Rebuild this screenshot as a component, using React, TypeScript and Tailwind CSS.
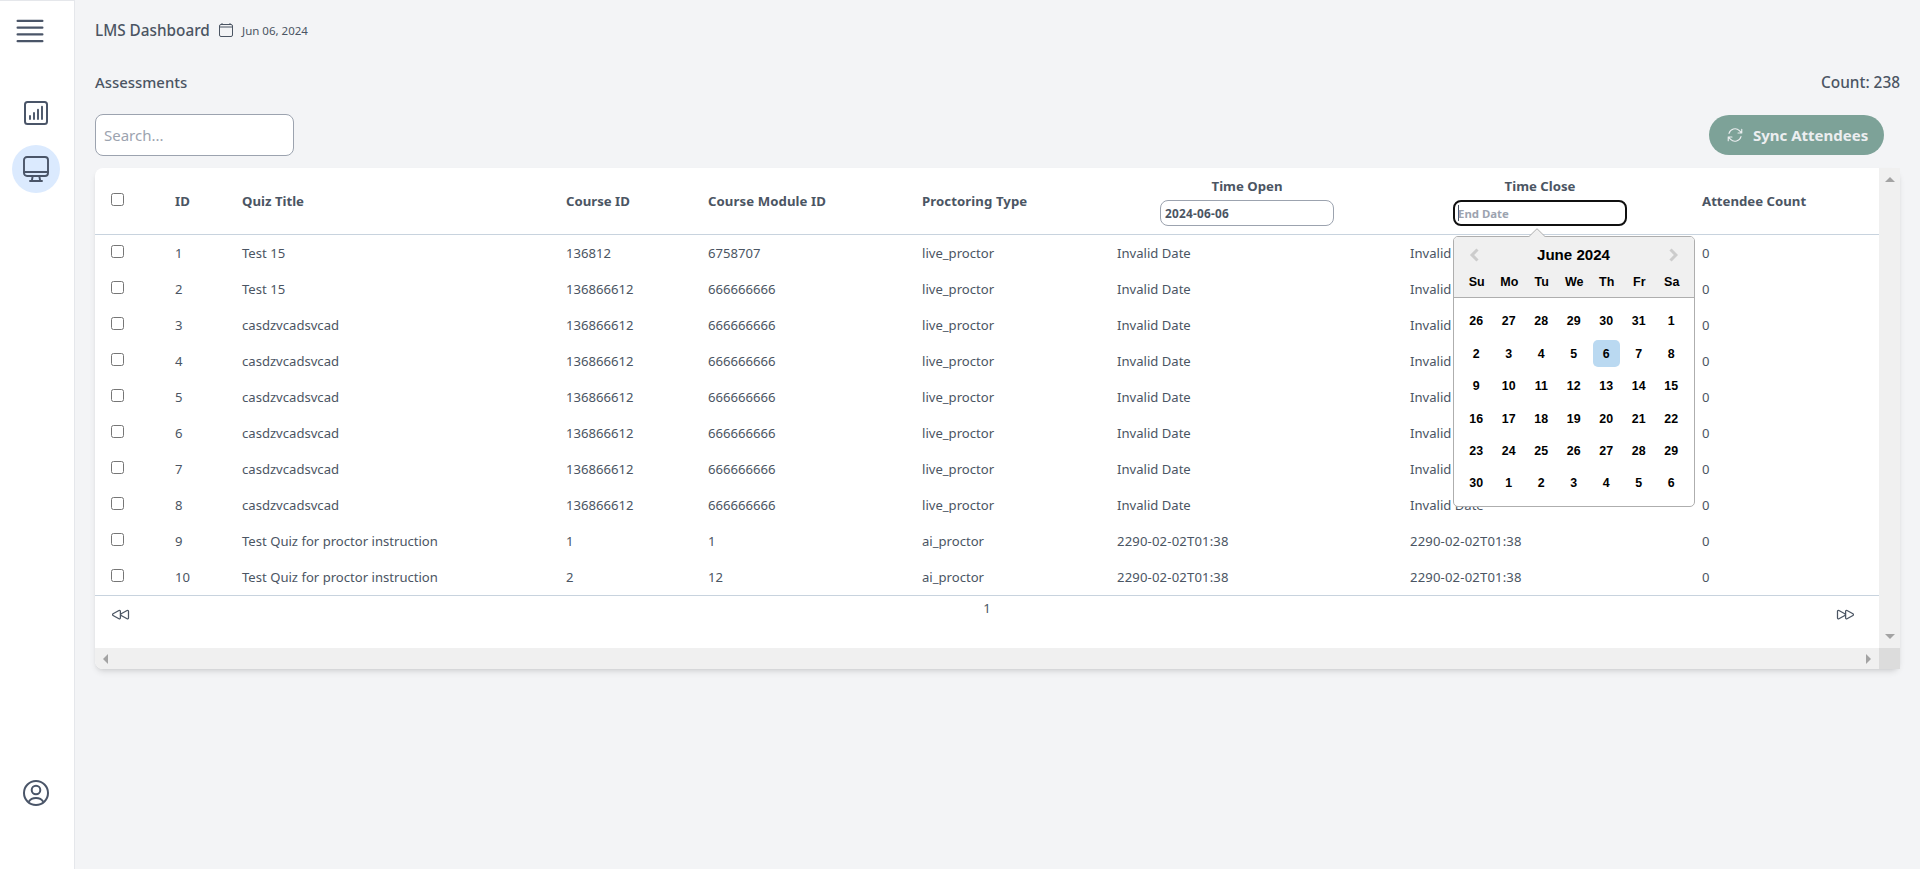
import { HiOutlineBars4, HiOutlineArrowPath, HiOutlineForward, HiOutlineBackward } from "react-icons/hi2";
import { IoCalendarClearOutline } from "react-icons/io5";
import type { ReactNode } from "react";

const sans = "font-['Noto_Sans','Open_Sans',sans-serif]";

type Row = [string, string, string, string, string, string, string];
const invalid = "Invalid Date";
const iso = "2290-02-02T01:38";
const cas = (id: string): Row => [id, "casdzvcadsvcad", "136866612", "666666666", "live_proctor", invalid, invalid];
const rows: Row[] = [
  ["1", "Test 15", "136812", "6758707", "live_proctor", invalid, invalid],
  ["2", "Test 15", "136866612", "666666666", "live_proctor", invalid, invalid],
  cas("3"), cas("4"), cas("5"), cas("6"), cas("7"), cas("8"),
  ["9", "Test Quiz for proctor instruction", "1", "1", "ai_proctor", iso, iso],
  ["10", "Test Quiz for proctor instruction", "2", "12", "ai_proctor", iso, iso],
];

const weeks = [
  [26, 27, 28, 29, 30, 31, 1],
  [2, 3, 4, 5, 6, 7, 8],
  [9, 10, 11, 12, 13, 14, 15],
  [16, 17, 18, 19, 20, 21, 22],
  [23, 24, 25, 26, 27, 28, 29],
  [30, 1, 2, 3, 4, 5, 6],
];

const cols = "grid grid-cols-[80px_67px_324px_142px_214px_195px_293px_292px_177px]";

function Checkbox() {
  return <span className="block size-[13px] rounded-[2.5px] border border-[#767676] bg-white" />;
}

function Sidebar() {
  return (
    <aside className="flex w-[75px] shrink-0 flex-col border-r border-t border-[#e5e7eb] bg-white text-[#4a5568]">
      <HiOutlineBars4 className="ml-3 mt-3 size-9" />
      <div className="mt-[40px] flex size-12 items-center justify-center self-center -translate-x-px">
        <svg viewBox="0 0 24 24" className="size-6" fill="none" stroke="currentColor" strokeWidth="2" strokeLinecap="round">
          <rect x="1" y="1" width="22" height="22" rx="2.5" />
          <path d="M6 15v3M10 12v6M14 8.7V18M18 5.7V18" strokeWidth="1.9" />
        </svg>
      </div>
      <div className="mt-2 flex size-12 items-center justify-center self-center rounded-full bg-[#dbeafe] -translate-x-px">
        <svg viewBox="0 0 26 26" className="size-[26px]" fill="none" stroke="currentColor" strokeWidth="1.9" strokeLinejoin="round" strokeLinecap="round">
          <rect x="1" y="1" width="24" height="19" rx="3" />
          <path d="M1 16h24M9.7 20 8.8 25M16.3 20l.9 5M7 25h12" />
        </svg>
      </div>
      <div className="mt-auto mb-[63px] flex self-center -translate-x-px">
        <svg viewBox="0 0 26 26" className="size-[26px]" fill="none" stroke="currentColor" strokeWidth="2">
          <circle cx="13" cy="13" r="12" />
          <circle cx="13" cy="10" r="4.3" />
          <path d="M5.7 21.8c1.6-2.6 4.2-3.8 7.3-3.8s5.7 1.2 7.3 3.8" />
        </svg>
      </div>
    </aside>
  );
}

function Calendar() {
  return (
    <div className="absolute left-0 top-full z-10 mt-[10px] w-[242px] rounded-[5px] border border-[#aeaeae] bg-white font-['Liberation_Sans',sans-serif] text-[12.8px] font-bold text-black">
      <svg viewBox="0 0 18 9" className="absolute left-[74px] top-[-9px] h-[9px] w-[18px]">
        <path d="M0.5 9 9 0.7 17.5 9" fill="#f0f0f0" stroke="#aeaeae" />
      </svg>
      <div className="h-[61px] rounded-t-[4px] border-b border-[#aeaeae] bg-[#f0f0f0]">
        <div className="flex h-[36px] items-center justify-between pl-[15px] pr-[16px]">
          <svg viewBox="0 0 10 14" className="h-[14px] w-[10px]" fill="none" stroke="#ccc" strokeWidth="3">
            <path d="M8.5 1.5 3 7l5.5 5.5" />
          </svg>
          <span className="text-[15.1px]">June 2024</span>
          <svg viewBox="0 0 10 14" className="h-[14px] w-[10px]" fill="none" stroke="#ccc" strokeWidth="3">
            <path d="M2.5 1.5 8 7l-5.5 5.5" />
          </svg>
        </div>
        <div className="grid grid-cols-[repeat(7,32.5px)] pl-[6.5px] text-center text-[12.5px] leading-[19px]">
          {["Su", "Mo", "Tu", "We", "Th", "Fr", "Sa"].map((d) => <span key={d}>{d}</span>)}
        </div>
      </div>
      <div className="pb-[7px] pl-[6px] pt-[7px] text-[12.4px]">
        {weeks.map((week, w) => (
          <div key={w} className="grid h-[32.4px] grid-cols-[repeat(7,32.5px)] items-center justify-items-center">
            {week.map((day, i) => (
              <span key={i} className={`flex h-[27px] w-[27px] items-center justify-center rounded-[5px] pt-px ${w === 1 && day === 6 ? "bg-[#bad9f1]" : ""}`}>{day}</span>
            ))}
          </div>
        ))}
      </div>
    </div>
  );
}

function DateColumn({ title, children }: { title: string; children: ReactNode }) {
  return (
    <div className="-ml-[10px] w-[280px] self-start pt-[8px]">
      <div className="flex flex-col items-center">
        <span className="leading-[20px]">{title}</span>
        <div className="relative mt-1">{children}</div>
      </div>
    </div>
  );
}

function Arrow({ d }: { d: string }) {
  return (
    <svg viewBox="0 0 10 10" className="size-[10px] text-[#a3a3a3]" fill="currentColor">
      <path d={d} />
    </svg>
  );
}

export default function App() {
  return (
    <div className={`flex h-[869px] w-[1920px] overflow-hidden bg-[#f3f4f6] text-[#4b5563] ${sans}`}>
      <Sidebar />
      <main className="flex-1 pl-5 pr-5">
        <div className="mt-[18px] flex h-6 items-center">
          <h1 className="w-[114px] whitespace-nowrap text-[15.3px] font-medium">LMS Dashboard</h1>
          <IoCalendarClearOutline className="ml-[9px] size-4" />
          <span className="ml-[8px] pt-px text-[11.5px]">Jun 06, 2024</span>
        </div>
        <div className="mt-7 flex h-6 items-center justify-between font-medium">
          <h2 className="text-[14.9px]">Assessments</h2>
          <span className="pt-[2px] text-[15.4px]">Count: 238</span>
        </div>
        <div className="mt-5 flex h-[42px] items-center justify-between">
          <div className="flex h-[42px] w-[199px] items-center rounded-lg border border-[#9ca3af] bg-white pl-2 text-[15px] text-[#9ca3af]">Search...</div>
          <div className="mr-4 flex h-10 w-[175px] items-center rounded-full bg-[#7da298] pl-[17px] text-[15px] font-bold text-[#eceef0]">
            <HiOutlineArrowPath className="size-[18px]" />
            <span className="ml-[9px] whitespace-nowrap">Sync Attendees</span>
          </div>
        </div>

        <section className="mt-3 flex h-[501px] w-[1805px] flex-col rounded-lg bg-white text-[13.1px] shadow-md">
          <div className="flex h-[480px]">
            <div className="w-[1784px]">
              <div className={`${cols} h-[67px] items-center border-b border-[#c8d3de] text-[13.2px] font-bold`}>
                <div className="-mt-[4px] pl-4"><Checkbox /></div>
                <span className="pt-[2px]">ID</span>
                <span className="pt-[2px]">Quiz Title</span>
                <span className="pt-[2px]">Course ID</span>
                <span className="pt-[2px] tracking-[0.08px]">Course Module ID</span>
                <span className="pt-[2px] tracking-[0.08px]">Proctoring Type</span>
                <DateColumn title="Time Open">
                  <div className="flex h-[26px] w-[174px] items-center rounded-lg border border-[#9ca3af] pl-1 text-[11.8px] tracking-[0.25px]">
                    <span className="pt-px">2024-06-06</span>
                  </div>
                </DateColumn>
                <DateColumn title="Time Close">
                  <div className="flex h-[26px] w-[174px] items-center rounded-lg border-2 border-[#101010] pl-[3px] text-[11.4px] text-[#9ca3af]">
                    <span className="-mr-px h-4 w-px bg-[#4b5563]" />
                    <span className="pt-px">End Date</span>
                  </div>
                  <Calendar />
                </DateColumn>
                <span className="pt-[2px]">Attendee Count</span>
              </div>
              {rows.map((row) => (
                <div key={row[0]} className={`${cols} h-9 items-center`}>
                  <div className="-mt-[3px] pl-4"><Checkbox /></div>
                  {row.map((cell, i) => <span key={i} className={cell === iso ? "pt-px tracking-[0.16px]" : "pt-px"}>{cell}</span>)}
                  <span className="pt-px">0</span>
                </div>
              ))}
              <div className="flex h-[53px] items-start justify-between border-t border-[#c8d3de] px-4">
                <HiOutlineBackward className="mt-[8px] size-5" />
                <span className="ml-2 mt-[3px]">1</span>
                <HiOutlineForward className="mr-2 mt-[8px] size-5" />
              </div>
            </div>
            <div className="flex w-[21px] flex-col items-center justify-between bg-[#f0f0f0] py-[7px]">
              <Arrow d="M0 7 5 2l5 5z" />
              <Arrow d="M0 3 5 8l5-5z" />
            </div>
          </div>
          <div className="flex h-[21px]">
            <div className="flex w-[1784px] items-center justify-between rounded-bl-lg bg-[#f0f0f0] px-[6px]">
              <Arrow d="M7 0 2 5l5 5z" />
              <Arrow d="M3 0 8 5l-5 5z" />
            </div>
            <div className="w-[21px] bg-[#dcdcdc]" />
          </div>
        </section>
      </main>
    </div>
  );
}
